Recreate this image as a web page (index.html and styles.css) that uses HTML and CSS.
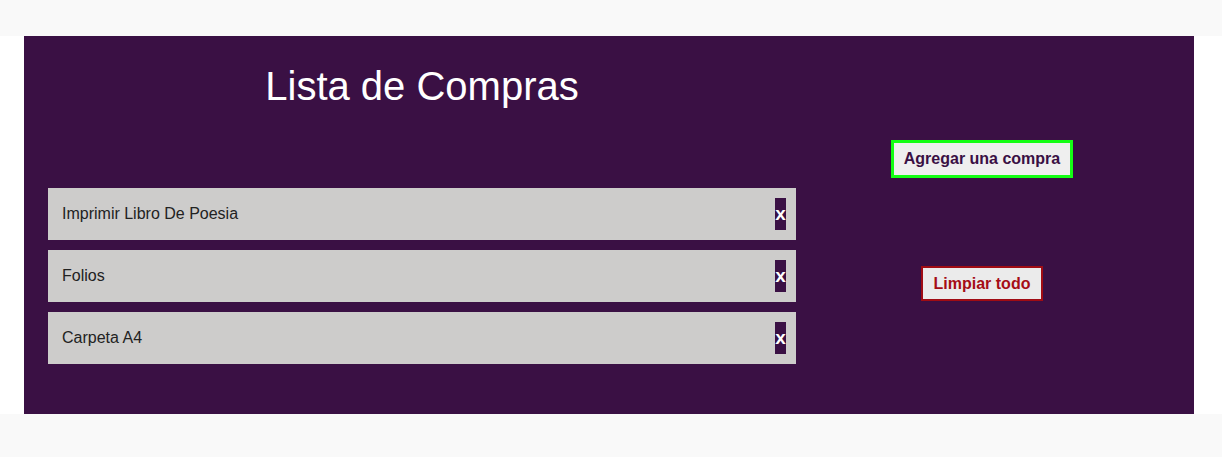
FILE: index.html
```html
<!DOCTYPE html>
<html lang="es">
<head>
<meta charset="utf-8">
<title>Lista de Compras</title>
<link rel="stylesheet" href="styles.css">
</head>
<body>
<div class="top-strip"></div>
<main class="page">
  <section class="panel">
    <div class="left">
      <h1 class="title">Lista de Compras</h1>
      <ul class="list">
        <li class="item"><span class="item-text">Imprimir Libro De Poesia</span><button class="remove">x</button></li>
        <li class="item"><span class="item-text">Folios</span><button class="remove">x</button></li>
        <li class="item"><span class="item-text">Carpeta A4</span><button class="remove">x</button></li>
      </ul>
    </div>
    <div class="right">
      <button class="btn-add">Agregar una compra</button>
      <button class="btn-clear">Limpiar todo</button>
    </div>
  </section>
</main>
<div class="bottom-strip"></div>
</body>
</html>
```
FILE: styles.css
```css
html, body {
  margin: 0;
  padding: 0;
  background: #ffffff;
  font-family: "Liberation Sans", Arial, sans-serif;
}
.top-strip {
  height: 36px;
  background: #f9f9f9;
}
.bottom-strip {
  height: 43px;
  background: #f9f9f9;
}
.page {
  padding: 0 28px 0 24px;
}
.panel {
  background: #3a1044;
  height: 378px;
  display: flex;
}
.left {
  width: 796px;
  padding: 0 24px;
  box-sizing: border-box;
}
.title {
  margin: 27px 0 0;
  font-size: 40px;
  font-weight: normal;
  line-height: 46px;
  color: #ffffff;
  text-align: center;
}
.list {
  list-style: none;
  margin: 79px 0 0;
  padding: 0;
  display: flex;
  flex-direction: column;
  gap: 10px;
}
.item {
  height: 52px;
  background: #cdcccb;
  display: flex;
  align-items: center;
  justify-content: space-between;
  padding: 0 10px 0 14px;
}
.item-text {
  font-size: 16px;
  color: #222222;
}
.remove {
  width: 11px;
  height: 32px;
  padding: 0;
  border: none;
  background: #3a1044;
  color: #ffffff;
  font-family: "Liberation Sans", Arial, sans-serif;
  font-weight: bold;
  font-size: 19px;
  line-height: 30px;
  display: flex;
  justify-content: center;
  align-items: center;
}
.right {
  flex: 1;
  display: flex;
  flex-direction: column;
  align-items: center;
  padding-right: 50px;
}
.btn-add {
  margin-top: 104px;
  height: 38px;
  padding: 0 10px;
  background: #efefef;
  border: 3px solid #14ff14;
  color: #3a1044;
  font-family: "Liberation Sans", Arial, sans-serif;
  font-weight: bold;
  font-size: 16px;
}
.btn-clear {
  margin-top: 88px;
  height: 35px;
  padding: 0 11px;
  background: #ebebeb;
  border: 2px solid #a00c14;
  color: #a50d16;
  font-family: "Liberation Sans", Arial, sans-serif;
  font-weight: bold;
  font-size: 16px;
}
```
